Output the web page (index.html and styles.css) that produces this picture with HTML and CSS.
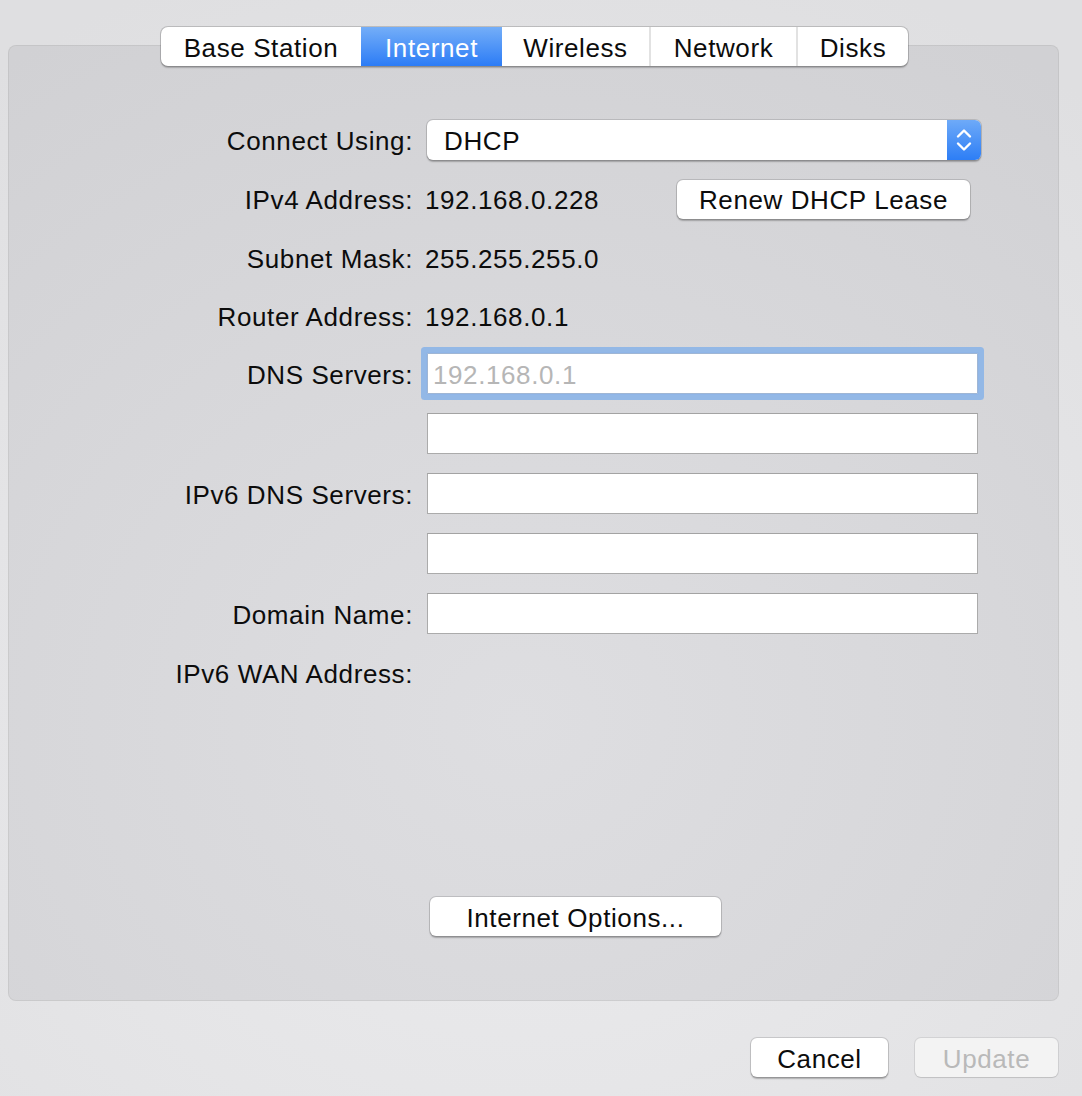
FILE: index.html
```html
<!DOCTYPE html>
<html>
<head>
<meta charset="utf-8">
<link rel="stylesheet" href="styles.css">
</head>
<body>
<div class="window">
  <div class="tabs">
    <div class="tab">Base Station</div>
    <div class="tab active">Internet</div>
    <div class="tab">Wireless</div>
    <div class="tab">Network</div>
    <div class="tab">Disks</div>
  </div>
  <div class="panel">
    <div class="form">
      <div class="label">Connect Using:</div>
      <div class="field">
        <div class="select">
          <span class="select-value">DHCP</span>
          <span class="stepper">
            <svg width="18" height="26" viewBox="0 0 18 26"><path d="M3 9.5 L9 3.5 L15 9.5" fill="none" stroke="#fff" stroke-width="2.4" stroke-linecap="round" stroke-linejoin="round"/><path d="M3 16.5 L9 22.5 L15 16.5" fill="none" stroke="#fff" stroke-width="2.4" stroke-linecap="round" stroke-linejoin="round"/></svg>
          </span>
        </div>
      </div>

      <div class="label">IPv4 Address:</div>
      <div class="field row-split">
        <span class="value">192.168.0.228</span>
        <button class="btn renew">Renew DHCP Lease</button>
      </div>

      <div class="label">Subnet Mask:</div>
      <div class="field"><span class="value">255.255.255.0</span></div>

      <div class="label">Router Address:</div>
      <div class="field"><span class="value">192.168.0.1</span></div>

      <div class="label">DNS Servers:</div>
      <div class="field"><div class="input focused"><span class="placeholder">192.168.0.1</span></div></div>

      <div class="label"></div>
      <div class="field"><div class="input"></div></div>

      <div class="label">IPv6 DNS Servers:</div>
      <div class="field"><div class="input"></div></div>

      <div class="label"></div>
      <div class="field"><div class="input"></div></div>

      <div class="label">Domain Name:</div>
      <div class="field"><div class="input"></div></div>

      <div class="label">IPv6 WAN Address:</div>
      <div class="field"></div>
    </div>
    <div class="options-row">
      <button class="btn options">Internet Options...</button>
    </div>
  </div>
  <div class="footer">
    <button class="btn cancel">Cancel</button>
    <button class="btn update" disabled>Update</button>
  </div>
</div>
</body>
</html>
```

FILE: styles.css
```css
html, body {
  margin: 0;
  padding: 0;
}
body {
  width: 1082px;
  height: 1096px;
  overflow: hidden;
  background: radial-gradient(ellipse 900px 800px at 520px 720px, #ececee 0%, #e5e5e7 55%, #dfdfe1 100%);
  font-family: "Liberation Sans", Arial, sans-serif;
  font-size: 26px;
  letter-spacing: 0.6px;
  color: #0c0c0c;
}
.window {
  padding-top: 27px;
}
.tabs {
  position: relative;
  z-index: 2;
  display: grid;
  grid-template-columns: 200px 141px 147px 147px 112px;
  width: 747px;
  height: 39px;
  margin-left: 161px;
  box-sizing: border-box;
  background: #fff;
  border-radius: 7px;
  box-shadow: 0 0 0 1px rgba(0,0,0,0.16), 0 1.5px 1.5px rgba(0,0,0,0.22);
  overflow: hidden;
}
.tab {
  display: flex;
  align-items: center;
  justify-content: center;
  padding-top: 2px;
  border-left: 2px solid #e2e2e2;
  color: #0c0c0c;
  line-height: 1;
}
.tab:first-child { border-left: none; }
.tab.active {
  background: linear-gradient(#74aef8, #2c7cf6);
  color: #fff;
  border-left: none;
}
.tab.active + .tab { border-left: none; }
.panel {
  margin: -21px 23px 0 8px;
  height: 956px;
  box-sizing: border-box;
  border-radius: 8px;
  background: rgba(0,0,12,0.058);
  border: 1px solid rgba(0,0,0,0.06);
  padding-top: 74px;
  display: flex;
  flex-direction: column;
}
.form {
  display: grid;
  grid-template-columns: 404px 564px;
  column-gap: 14px;
  grid-template-rows: 40px 40px 40px 37px 41px 41px 41px 41px 41px 40px;
  row-gap: 19px;
}
.label {
  display: flex;
  align-items: center;
  justify-content: flex-end;
  padding-top: 3px;
  white-space: nowrap;
}
.field {
  display: flex;
  align-items: center;
}
.value {
  margin-left: -2px;
  padding-top: 3px;
}
.row-split {
  justify-content: space-between;
  padding-right: 21px;
}
.select {
  width: 554px;
  height: 40px;
  box-sizing: border-box;
  background: #fff;
  border-radius: 6px;
  box-shadow: 0 0 0 1px rgba(0,0,0,0.12), 0 1.5px 1.5px rgba(0,0,0,0.25);
  display: flex;
  align-items: center;
  overflow: hidden;
}
.select-value {
  flex: 1;
  padding-left: 17px;
  padding-top: 2px;
}
.stepper {
  width: 34px;
  height: 100%;
  background: linear-gradient(#6eaaf8, #2d7ef6);
  display: flex;
  align-items: center;
  justify-content: center;
}
.input {
  width: 551px;
  height: 41px;
  box-sizing: border-box;
  background: #fff;
  border: 1px solid #ababab;
  border-top-color: #a3a3a3;
  display: flex;
  align-items: center;
}
.input.focused {
  box-shadow: 0 0 0 1px #8fb5e8, 0 0 0 6px #93b8e6;
  border-radius: 1px;
  border-color: #9fb6d4;
}
.placeholder {
  color: #b6b6b6;
  padding-left: 5px;
  padding-top: 3px;
}
.btn {
  font-family: inherit;
  font-size: 26px;
  letter-spacing: 0.6px;
  color: #0c0c0c;
  background: #fff;
  border: none;
  border-radius: 6px;
  box-shadow: 0 0 0 1px rgba(0,0,0,0.13), 0 1.5px 1.5px rgba(0,0,0,0.25);
  height: 39px;
  padding: 2px 0 0;
  line-height: 1;
}
.renew {
  width: 293px;
}
.options-row {
  margin-top: auto;
  margin-bottom: 64px;
  padding-left: 421px;
}
.options {
  width: 291px;
}
.footer {
  display: flex;
  justify-content: flex-end;
  gap: 27px;
  padding-right: 24px;
  margin-top: 37px;
}
.cancel {
  width: 137px;
}
.update {
  width: 143px;
  background: #f3f3f3;
  color: #b9b9b9;
  box-shadow: 0 0 0 1px rgba(0,0,0,0.08), 0 1px 1px rgba(0,0,0,0.08);
}
```
